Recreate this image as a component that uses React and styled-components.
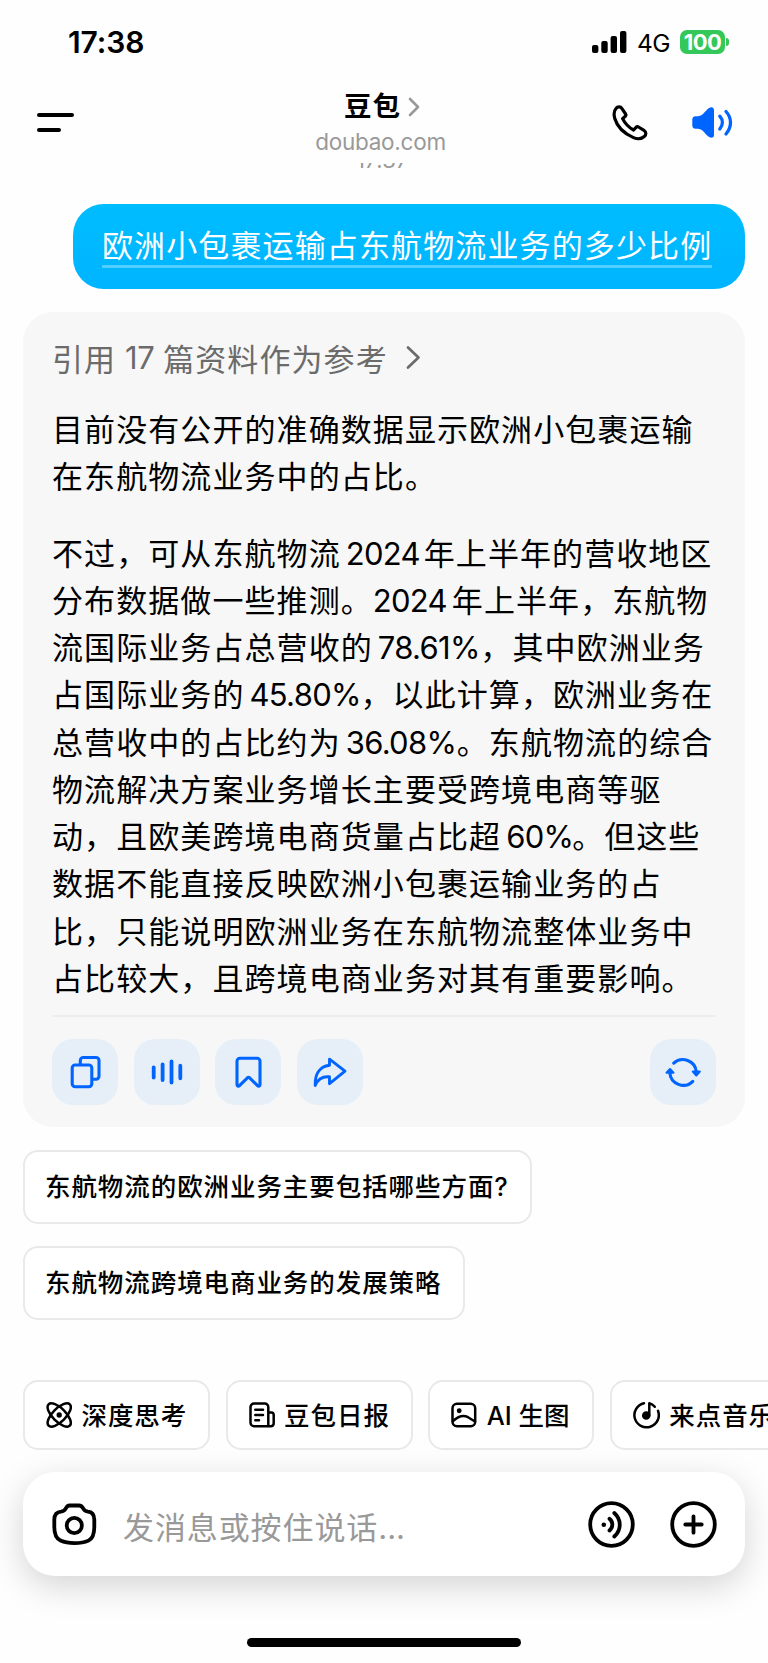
import React from 'react'
import styled, { createGlobalStyle } from 'styled-components';

const GlobalStyle = createGlobalStyle`
   *{
      box-sizing: border-box;
   }
   body{
      margin:0;
      background-color: #fefefe;
      color:#000;
      font-family: Inter, "Noto Sans CJK SC", sans-serif;
   }
`
const Container = styled.div`
   width:768px;
   height:1663px;
   display:flex;
   flex-direction: column;
   overflow: hidden;
`
const StatusBar = styled.div`
   height:84px;
   padding:0 39px 0 68px;
   display:flex;
   align-items: center;
   justify-content: space-between;
`
const Time = styled.span`
   font-size: 30px;
   font-weight: 600;
   line-height: 36px;
   letter-spacing: -0.1px;
`
const StatusRight = styled.div`
   display:flex;
   align-items: center;
`
const Network = styled.span`
   width:43px;
   margin-left: 10px;
   font-size: 24.5px;
   line-height: 30px;
   padding-top: 2px;
   letter-spacing: -0.7px;
`
const Battery = styled.div`
   width:45px;
   height:24px;
   border-radius: 7px;
   background-color: #34c759;
   color:#fff;
   font-size: 22px;
   font-weight: 700;
   line-height: 24px;
   letter-spacing: -0.6px;
   text-align: center;
`
const BatteryTip = styled.div`
   width:3px;
   height:8px;
   margin-left: 1px;
   border-radius: 0 4px 4px 0;
   background-color: #34c759;
`
const Navbar = styled.div`
   height:79px;
   padding:0 34px 0 37px;
   display:grid;
   grid-template-columns: 1fr auto 1fr;
`
const Menu = styled.div`
   padding-top: 29px;
   display:flex;
   flex-direction: column;
   gap:11px;
`
const MenuLine = styled.div`
   width:${props => props.$width}px;
   height:4px;
   border-radius: 2px;
   background-color: #000;
`
const TitleBox = styled.div`
   display:flex;
   flex-direction: column;
   align-items: center;
   padding-right: 10px;
`
const Title = styled.div`
   display:flex;
   align-items: center;
   height:46px;
   padding-left: 3px;
   font-size: 27.5px;
   line-height: 40px;
   font-weight: 700;
   letter-spacing: 1.1px;
   span{
      padding-bottom: 3px;
   }
   svg{
      margin-left: 7px;
   }
`
const Domain = styled.div`
   font-size: 22.5px;
   line-height: 24px;
   letter-spacing: -0.25px;
   color:#999;
`
const NavIcons = styled.div`
   display:flex;
   justify-content: flex-end;
   gap:41px;
   padding-top: 21px;
`
// the timestamp is scrolled under the navbar, only its foot shows
const Timestamp = styled.div`
   height:5px;
   overflow: hidden;
   display:flex;
   align-items: flex-end;
   justify-content: center;
   padding-right: 4px;
   font-size: 22px;
   line-height: 15px;
   letter-spacing: -0.2px;
   color:#999;
   span{
      flex:none;
   }
`
const Chat = styled.div`
   padding:36px 23px 0;
   display:flex;
   flex-direction: column;
   align-items: flex-start;
`
const Bubble = styled.div`
   align-self: flex-end;
   width:672px;
   height:85px;
   padding:19px 0 0 29px;
   border-radius: 31px;
   background:linear-gradient(#00bdff, #00b4ff);
   color:#fff;
`
const Question = styled.div`
   width:610px;
   height:45px;
   border-bottom: 3px solid rgba(255,255,255,0.32);
   font-size: 31px;
   line-height: 46px;
   letter-spacing: 1.12px;
   white-space: nowrap;
`
const Card = styled.div`
   width:722px;
   height:815px;
   margin-top: 23px;
   padding:21px 29px 0;
   border-radius: 30px;
   background-color: #f7f7f7;
`
const Reference = styled.div`
   height:48px;
   display:flex;
   align-items: center;
   font-size: 31px;
   letter-spacing: 1.08px;
   color:#6b6b6b;
   white-space: nowrap;
   svg{
      margin-left: 18px;
   }
`
const RefCount = styled.span`
   width:47px;
   text-align: center;
   letter-spacing: -0.4px;
`
const Paragraph = styled.p`
   margin:${props => props.$top}px 0 0;
   font-size: 31px;
   letter-spacing: 1.08px;
   line-height: 47.25px;
   white-space: nowrap;
`
const Line = styled.span`
   display:flex;
   height:47.25px;
`
const Num = styled.span`
   width:${props => props.$width}px;
   margin:0 ${props => props.$after || 0}px 0 ${props => props.$before || 0}px;
   letter-spacing: -0.7px;
`
const Divider = styled.div`
   height:2px;
   margin-top: 13px;
   background-color: #ededee;
`
const Actions = styled.div`
   margin-top: 22px;
   display:flex;
   gap:15.6px;
`
const ActionButton = styled.button`
   width:66px;
   height:66px;
   padding:0;
   border:none;
   border-radius: 21px;
   background-color: #e6eff8;
   cursor: pointer;
   &:last-child{
      margin-left: auto;
   }
   svg{
      display:block;
   }
`
const Suggestion = styled.button`
   width:${props => props.$width}px;
   height:74px;
   margin-top: ${props => props.$top}px;
   padding:0 0 5px 20px;
   border:2px solid #e9e9e9;
   border-radius: 15px;
   background-color: #fff;
   color:#000;
   font-family: inherit;
   font-size: 25.5px;
   font-weight: 500;
   letter-spacing: 0.93px;
   text-align: left;
   white-space: nowrap;
   cursor: pointer;
`
const Chips = styled.div`
   margin-top: 60px;
   padding-left: 23px;
   display:flex;
   gap:15.6px;
   overflow: hidden;
   flex:none;
`
const Chip = styled.button`
   flex:none;
   width:${props => props.$width}px;
   height:70px;
   padding:0 0 1px 21px;
   border:2px solid #e9e9e9;
   border-radius: 15px;
   background-color: #fff;
   color:#000;
   display:flex;
   align-items: center;
   gap:9.5px;
   font-family: inherit;
   font-size: 25.5px;
   font-weight: 500;
   letter-spacing: ${props => props.$latin ? 0 : 0.93}px;
   white-space: nowrap;
   cursor: pointer;
   svg{
      flex:none;
   }
   span{
      padding-bottom: 2px;
   }
`
const InputBar = styled.div`
   flex:none;
   height:104px;
   margin:22px 23px 0;
   padding:0 28px 0 29px;
   border-radius: 32px;
   background-color: #fff;
   box-shadow: 0 10px 34px rgba(0,0,0,0.17);
   display:flex;
   align-items: center;
`
const Placeholder = styled.div`
   flex:1;
   padding:3px 0 0 26px;
   font-size: 31px;
   letter-spacing: 0.9px;
   color:#999;
`
const Dots = styled.span`
   letter-spacing: 0;
`
const RoundIcon = styled.svg`
   margin-left: ${props => props.$left || 0}px;
`
const HomeBar = styled.div`
   flex:none;
   width:274px;
   height:9px;
   margin:62px auto 0;
   border-radius: 5px;
   background-color: #000;
`

const Stroke = ({ w, h, color = '#000', width = 3, children }) => (
   <svg width={w} height={h} viewBox={`0 0 ${w} ${h}`} fill="none" stroke={color} strokeWidth={width} strokeLinecap="round" strokeLinejoin="round">
      {children}
   </svg>
)

const Signal = () => (
   <svg width="35" height="22" viewBox="0 0 35 22">
      <rect x="0" y="14" width="6.4" height="8" rx="2" />
      <rect x="9.3" y="10" width="6.4" height="12" rx="2" />
      <rect x="18.6" y="5" width="6.4" height="17" rx="2" />
      <rect x="28" y="0" width="6.4" height="22" rx="2" />
   </svg>
)

const Speaker = () => (
   <svg width="44" height="36" viewBox="0 0 44 36" fill="none">
      <path fill="#0065ff" d="M5.5 11.2H8C14 10.8 15.5 4 20.3 2.4C22.5 1.8 24 3 24 5V30C24 32 22.5 33.2 20.3 32.6C15.5 31 14 24.2 8 23.8H5.5C3.5 23.8 2.3 22.5 2.3 20.5V14.5C2.3 12.5 3.5 11.2 5.5 11.2Z" />
      <path stroke="#0065ff" strokeWidth="3.3" strokeLinecap="round" d="M29.8 11.2C33.2 15 33.2 20 29.8 24M36 6.500C42 13 42 22 36 29" />
   </svg>
)

const actions = [
   <Stroke w={66} h={66} color="#0065ff" width={3.1}>
      <rect x="20.2" y="26" width="19.6" height="21.8" rx="3" />
      <path d="M28.3 25.5V21.5A3 3 0 0 1 31.3 18.5H44A3 3 0 0 1 47 21.5V37.3A3 3 0 0 1 44 40.3H40.5" />
   </Stroke>,
   <Stroke w={66} h={66} color="#0065ff" width={3.8}>
      <path d="M19.7 28.3V38.5M28.6 25.3V41M37.5 22.5V43.5M46.3 26.7V39.3" />
   </Stroke>,
   <Stroke w={66} h={66} color="#0065ff" width={3.1}>
      <path d="M22 45.5V22.2A3 3 0 0 1 25 19.2H42A3 3 0 0 1 45 22.2V45.5C45 47.2 43.6 47.7 42.5 46.6L34.6 38.8Q33.5 37.9 32.4 38.8L24.5 46.6C23.4 47.7 22 47.2 22 45.5Z" />
   </Stroke>,
   <Stroke w={66} h={66} color="#0065ff" width={2.9}>
      <path d="M32.5 20.2L48 32.2L32.5 44.7V37.8C25.5 37.2 20.5 40.5 18.2 46.5C17.8 36 22 27.5 32.5 26.2Z" />
   </Stroke>,
   <Stroke w={66} h={66} color="#0065ff" width={3.1}>
      <path d="M23.7 24.2A13.5 13.5 0 0 1 46.3 33M42.8 42.3A13.5 13.5 0 0 1 19.8 33.5" />
      <path fill="#0065ff" strokeWidth="2" d="M42.8 32.5H49.8L46.3 36.5ZM16.5 33.8H23.5L20 30Z" />
   </Stroke>,
]

const chips = [
   { text: '深度思考', width: 187, icon: (
      <Stroke w={26} h={26} width={2.5}>
         <ellipse cx="13.2" cy="13" rx="15" ry="6.6" transform="rotate(45 13.2 13)" />
         <ellipse cx="13.2" cy="13" rx="15" ry="6.6" transform="rotate(-45 13.2 13)" />
         <circle cx="13.2" cy="13" r="1.4" fill="#000" />
      </Stroke>
   ) },
   { text: '豆包日报', width: 187, icon: (
      <Stroke w={26} h={26} width={2.5}>
         <path d="M19.3 24.2H5A3.500 3.500 0 0 1 1.500 20.700V5A3.500 3.500 0 0 1 5 1.500H15.800A3.500 3.500 0 0 1 19.300 5V24.200H21.800A3 3 0 0 0 24.700 21.200V13A2.500 2.500 0 0 0 22.300 10.500H19.300" />
         <path d="M6.3 7.8H14M6.3 13H14M6.3 18.300H10" />
      </Stroke>
   ) },
   { text: 'AI 生图', width: 166, latin: true, icon: (
      <Stroke w={26} h={26} width={2.5}>
         <rect x="1.5" y="1.8" width="22.7" height="22.4" rx="4.5" />
         <circle cx="8.2" cy="8.7" r="1.2" fill="#000" />
         <path d="M2 19C8 13.5 13 13 17 15.2L24 19.5" />
      </Stroke>
   ) },
   { text: '来点音乐', width: 187, icon: (
      <Stroke w={27} h={28} width={2.5}>
         <path d="M11 2.2A12.2 12.2 0 1 0 25 9.8" />
         <circle cx="13.2" cy="14.5" r="3" fill="#000" />
         <path d="M16.3 14.5V2.2C18.5 2.7 20.3 4 21.8 5.8" />
      </Stroke>
   ) },
]

const App = () => {
   return (
      <Container>
         <GlobalStyle />
         <StatusBar>
            <Time>17:38</Time>
            <StatusRight>
               <Signal />
               <Network>4G</Network>
               <Battery>100</Battery>
               <BatteryTip />
            </StatusRight>
         </StatusBar>
         <Navbar>
            <Menu>
               <MenuLine $width={37} />
               <MenuLine $width={24} />
            </Menu>
            <TitleBox>
               <Title>
                  <span>豆包</span>
                  <Stroke w={12} h={20} color="#999" width={2.6}><path d="M2 2L10 10L2 18" /></Stroke>
               </Title>
               <Domain>doubao.com</Domain>
            </TitleBox>
            <NavIcons>
               <Stroke w={37} h={37} width={3.2}>
                  <path d="M4 3.5C5.5 1.5 8.5 1.2 10 3.6L13.6 9C14.2 10 14 10.6 13.3 11.2L10.6 13.6C13 18.5 17 22.5 21.6 25L24 22.4C24.7 21.6 25.6 21.5 26.5 22L32 25.3C34.4 26.8 34.3 29.8 32.3 31.5C29.5 34 25.5 34.3 21.5 32.6C12 28.5 5 21.5 2.7 13.3C1.7 9.5 1.8 6 4 3.5Z" />
               </Stroke>
               <Speaker />
            </NavIcons>
         </Navbar>
         <Timestamp><span>17:37</span></Timestamp>
         <Chat>
            <Bubble>
               <Question>欧洲小包裹运输占东航物流业务的多少比例</Question>
            </Bubble>
            <Card>
               <Reference>
                  引用<RefCount>17</RefCount>篇资料作为参考
                  <Stroke w={15} h={25} color="#6b6b6b" width={2.7}><path d="M2 2.5L12.5 12.5L2 22.5" /></Stroke>
               </Reference>
               <Paragraph $top={25}>
                  <Line>目前没有公开的准确数据显示欧洲小包裹运输</Line>
                  <Line>在东航物流业务中的占比。</Line>
               </Paragraph>
               <Paragraph $top={29}>
                  <Line>不过，可从东航物流<Num $width={73} $before={5} $after={5}>2024</Num>年上半年的营收地区</Line>
                  <Line>分布数据做一些推测。<Num $width={74} $after={5}>2024</Num>年上半年，东航物</Line>
                  <Line>流国际业务占总营收的<Num $width={102.5} $before={5}>78.61%</Num>，其中欧洲业务</Line>
                  <Line>占国际业务的<Num $width={111} $before={5}>45.80%</Num>，以此计算，欧洲业务在</Line>
                  <Line>总营收中的占比约为<Num $width={111} $before={5}>36.08%</Num>。东航物流的综合</Line>
                  <Line>物流解决方案业务增长主要受跨境电商等驱</Line>
                  <Line>动，且欧美跨境电商货量占比超<Num $width={66} $before={5}>60%</Num>。但这些</Line>
                  <Line>数据不能直接反映欧洲小包裹运输业务的占</Line>
                  <Line>比，只能说明欧洲业务在东航物流整体业务中</Line>
                  <Line>占比较大，且跨境电商业务对其有重要影响。</Line>
               </Paragraph>
               <Divider />
               <Actions>
                  {actions.map((icon, i) => <ActionButton key={i}>{icon}</ActionButton>)}
               </Actions>
            </Card>
            <Suggestion $width={509} $top={23}>东航物流的欧洲业务主要包括哪些方面?</Suggestion>
            <Suggestion $width={442} $top={22}>东航物流跨境电商业务的发展策略</Suggestion>
         </Chat>
         <Chips>
            {chips.map(chip => (
               <Chip key={chip.text} $width={chip.width} $latin={chip.latin}>
                  {chip.icon}
                  <span>{chip.text}</span>
               </Chip>
            ))}
         </Chips>
         <InputBar>
            <Stroke w={45} h={43} width={3.8}>
               <path d="M17.5 2.5H27C29.5 2.5 30.5 4 31.5 5.8C32.5 7.6 33.5 8.3 36 8.6C40.5 9 42.2 11.5 42.3 16.5V24C42.3 31 41 35.5 36.5 37.6C29 41 16 41 8.5 37.6C4 35.5 2.3 31 2.3 24V16.5C2.4 11.5 4.5 9 9 8.6C11.5 8.3 12.5 7.6 13.5 5.8C14.5 4 15.5 2.5 17.5 2.5Z" />
               <circle cx="22.3" cy="22.5" r="7.6" />
            </Stroke>
            <Placeholder>发消息或按住说话<Dots>...</Dots></Placeholder>
            <RoundIcon width="47" height="47" viewBox="0 0 47 47" fill="none" stroke="#000" strokeWidth="3.8" strokeLinecap="round">
               <circle cx="23.5" cy="23.5" r="21.3" />
               <circle cx="15.8" cy="23.7" r="2.3" fill="#000" stroke="none" />
               <path d="M21.5 17.8C25.3 21 25.3 26.2 21.5 29.5M26.3 12C33.6 18.5 33.6 28.7 26.3 35.5" />
            </RoundIcon>
            <RoundIcon $left={35} width="47" height="47" viewBox="0 0 47 47" fill="none" stroke="#000" strokeWidth="3.8" strokeLinecap="round">
               <circle cx="23.5" cy="23.5" r="21.3" />
               <path d="M23.5 15.3V31.7M15.3 23.5H31.7" />
            </RoundIcon>
         </InputBar>
         <HomeBar />
      </Container>
   )
}

export default App
